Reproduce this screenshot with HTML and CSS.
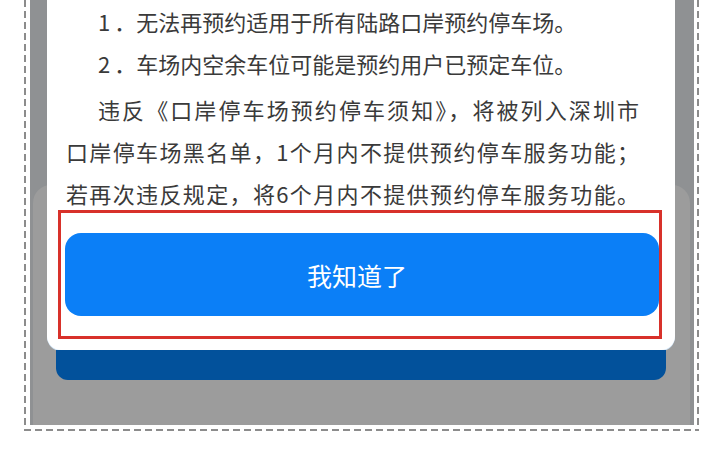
FILE: index.html
```html
<!DOCTYPE html>
<html lang="zh-CN">
<head>
<meta charset="utf-8">
<title>预约停车须知</title>
<link rel="stylesheet" href="styles.css">
</head>
<body>
<div class="frame">
  <div class="screen">
    <div class="dialog">
      <div class="text">
        <div class="item"><span class="num">1</span>．无法再预约适用于所有陆路口岸预约停车场。</div>
        <div class="item"><span class="num">2</span>．车场内空余车位可能是预约用户已预定车位。</div>
        <div class="para">
          <div class="jl first">违反《口岸停车场预约停车须知》，将被列入深圳市</div>
          <div class="jl">口岸停车场黑名单，1个月内不提供预约停车服务功能；</div>
          <div class="jl">若再次违反规定，将6个月内不提供预约停车服务功能。</div>
        </div>
      </div>
      <div class="mark">
        <div class="btn">我知道了</div>
      </div>
    </div>
    <div class="bar"></div>
  </div>
</div>
</body>
</html>
```
FILE: styles.css
```css
html, body {
  margin: 0;
  padding: 0;
  background: #ffffff;
}

body {
  font-family: "Noto Sans CJK SC", "Noto Sans", sans-serif;
  width: 726px;
  height: 453px;
  overflow: hidden;
}

.frame {
  box-sizing: border-box;
  margin-left: 24px;
  width: 675px;
  height: 431px;
  padding: 0 5px 6px 6px;
  background:
    repeating-linear-gradient(90deg, #8c8c8c 0 7px, transparent 7px 11px) left bottom / 100% 2px no-repeat,
    repeating-linear-gradient(180deg, #8c8c8c 0 7px, transparent 7px 11px) left top / 2px 100% no-repeat,
    repeating-linear-gradient(180deg, #8c8c8c 0 7px, transparent 7px 11px) right top / 2px 100% no-repeat;
}

.screen {
  position: relative;
  box-sizing: border-box;
  height: 100%;
  padding: 0 19px 0 17px;
  background: #8f9193;
  overflow: hidden;
}

.screen::before {
  content: "";
  position: absolute;
  left: 3px;
  right: 4px;
  top: 185px;
  bottom: -30px;
  border-radius: 18px;
  background: #9c9c9c;
}

.dialog {
  position: relative;
  background: #ffffff;
  border-radius: 0 0 14px 14px;
  padding: 0 13px 11px 11px;
  box-shadow: 0 1px 0 #cfe4f7;
}

.text {
  margin: 0 23px 0 8px;
  color: #3a3a3a;
  font-size: 22px;
  line-height: 42px;
}

.item {
  padding-left: 32px;
  white-space: nowrap;
}

.num {
  margin-right: 4px;
}

.para {
  margin-top: 4px;
}

.jl {
  white-space: nowrap;
  text-align: justify;
  text-align-last: justify;
}

.jl.first {
  padding-left: 32px;
}

.mark {
  position: relative;
  margin-top: -4px;
  border: 3px solid #d8312a;
  padding: 20px 0 20px 4px;
}

.btn {
  height: 83px;
  border-radius: 16px;
  background: #0b7ff7;
  color: #ffffff;
  font-size: 25px;
  display: flex;
  align-items: center;
  justify-content: center;
  padding-right: 10px;
}

.bar {
  position: relative;
  margin: 0 9px;
  height: 30px;
  background: #02519b;
  border-radius: 0 0 12px 12px;
}
```
